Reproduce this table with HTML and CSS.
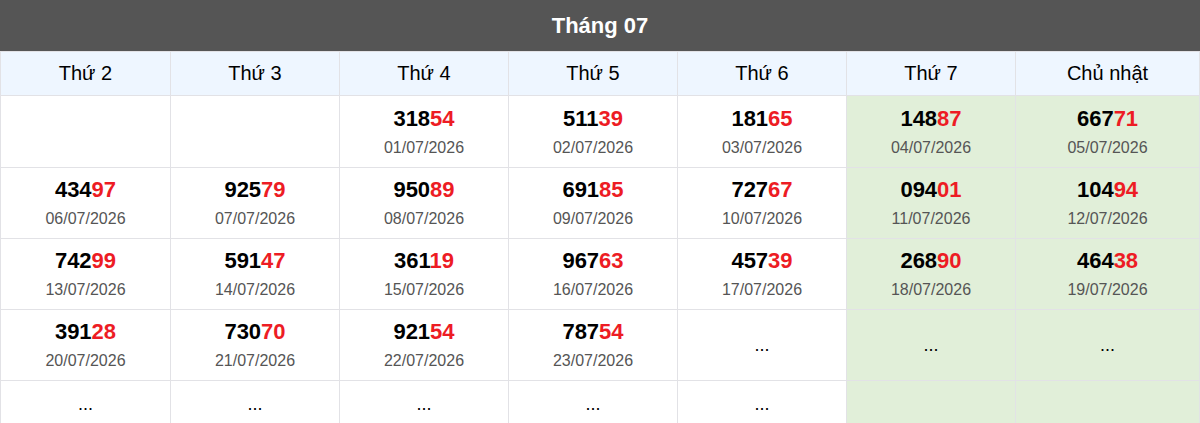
FILE: index.html
```html
<!DOCTYPE html>
<html lang="vi">
<head>
<meta charset="utf-8">
<link rel="stylesheet" href="styles.css">
</head>
<body>
<table class="cal">
  <colgroup>
    <col class="c1"><col class="c"><col class="c"><col class="c"><col class="c"><col class="c"><col class="cl">
  </colgroup>
  <thead>
    <tr><th class="title" colspan="7">Tháng 07</th></tr>
    <tr class="days">
      <th>Thứ 2</th><th>Thứ 3</th><th>Thứ 4</th><th>Thứ 5</th><th>Thứ 6</th><th>Thứ 7</th><th>Chủ nhật</th>
    </tr>
  </thead>
  <tbody>
    <tr class="first">
      <td></td>
      <td></td>
      <td><div class="num">318<span>54</span></div><div class="date">01/07/2026</div></td>
      <td><div class="num">511<span>39</span></div><div class="date">02/07/2026</div></td>
      <td><div class="num">181<span>65</span></div><div class="date">03/07/2026</div></td>
      <td class="we"><div class="num">148<span>87</span></div><div class="date">04/07/2026</div></td>
      <td class="we"><div class="num">667<span>71</span></div><div class="date">05/07/2026</div></td>
    </tr>
    <tr>
      <td><div class="num">434<span>97</span></div><div class="date">06/07/2026</div></td>
      <td><div class="num">925<span>79</span></div><div class="date">07/07/2026</div></td>
      <td><div class="num">950<span>89</span></div><div class="date">08/07/2026</div></td>
      <td><div class="num">691<span>85</span></div><div class="date">09/07/2026</div></td>
      <td><div class="num">727<span>67</span></div><div class="date">10/07/2026</div></td>
      <td class="we"><div class="num">094<span>01</span></div><div class="date">11/07/2026</div></td>
      <td class="we"><div class="num">104<span>94</span></div><div class="date">12/07/2026</div></td>
    </tr>
    <tr>
      <td><div class="num">742<span>99</span></div><div class="date">13/07/2026</div></td>
      <td><div class="num">591<span>47</span></div><div class="date">14/07/2026</div></td>
      <td><div class="num">361<span>19</span></div><div class="date">15/07/2026</div></td>
      <td><div class="num">967<span>63</span></div><div class="date">16/07/2026</div></td>
      <td><div class="num">457<span>39</span></div><div class="date">17/07/2026</div></td>
      <td class="we"><div class="num">268<span>90</span></div><div class="date">18/07/2026</div></td>
      <td class="we"><div class="num">464<span>38</span></div><div class="date">19/07/2026</div></td>
    </tr>
    <tr>
      <td><div class="num">391<span>28</span></div><div class="date">20/07/2026</div></td>
      <td><div class="num">730<span>70</span></div><div class="date">21/07/2026</div></td>
      <td><div class="num">921<span>54</span></div><div class="date">22/07/2026</div></td>
      <td><div class="num">787<span>54</span></div><div class="date">23/07/2026</div></td>
      <td class="dots">...</td>
      <td class="we dots">...</td>
      <td class="we dots">...</td>
    </tr>
    <tr class="last">
      <td class="dots">...</td>
      <td class="dots">...</td>
      <td class="dots">...</td>
      <td class="dots">...</td>
      <td class="dots">...</td>
      <td class="we"></td>
      <td class="we"></td>
    </tr>
  </tbody>
</table>
</body>
</html>
```
FILE: styles.css
```css
html, body {
  margin: 0;
  padding: 0;
  background: #fff;
}
body {
  font-family: "Liberation Sans", Arial, sans-serif;
  color: #000;
}
.cal {
  width: 1200px;
  border-collapse: collapse;
  table-layout: fixed;
}
.c1 { width: 170px; }
.c { width: 169px; }
.cl { width: 184px; }
.cal th, .cal td {
  border: 1px solid #e2e2e6;
  text-align: center;
  padding: 0;
}
.cal th.title {
  background: #555555;
  color: #fff;
  font-size: 22px;
  font-weight: bold;
  height: 50px;
  border-color: #555555;
  border-bottom-color: #e2e2e6;
}
.days th {
  background: #eef6ff;
  font-weight: normal;
  font-size: 20px;
  height: 43px;
}
.cal td {
  height: 70px;
  vertical-align: middle;
}
.cal .first td {
  height: 71px;
}
.cal .last td {
  height: 46px;
}
.cal td.we {
  background: #e1efd9;
}
.num {
  font-size: 22px;
  font-weight: bold;
  line-height: 26px;
}
.num span {
  color: #ed1c24;
}
.date {
  font-size: 16px;
  color: #555;
  line-height: 20px;
  margin-top: 6px;
}
.dots {
  font-size: 18px;
}
```
